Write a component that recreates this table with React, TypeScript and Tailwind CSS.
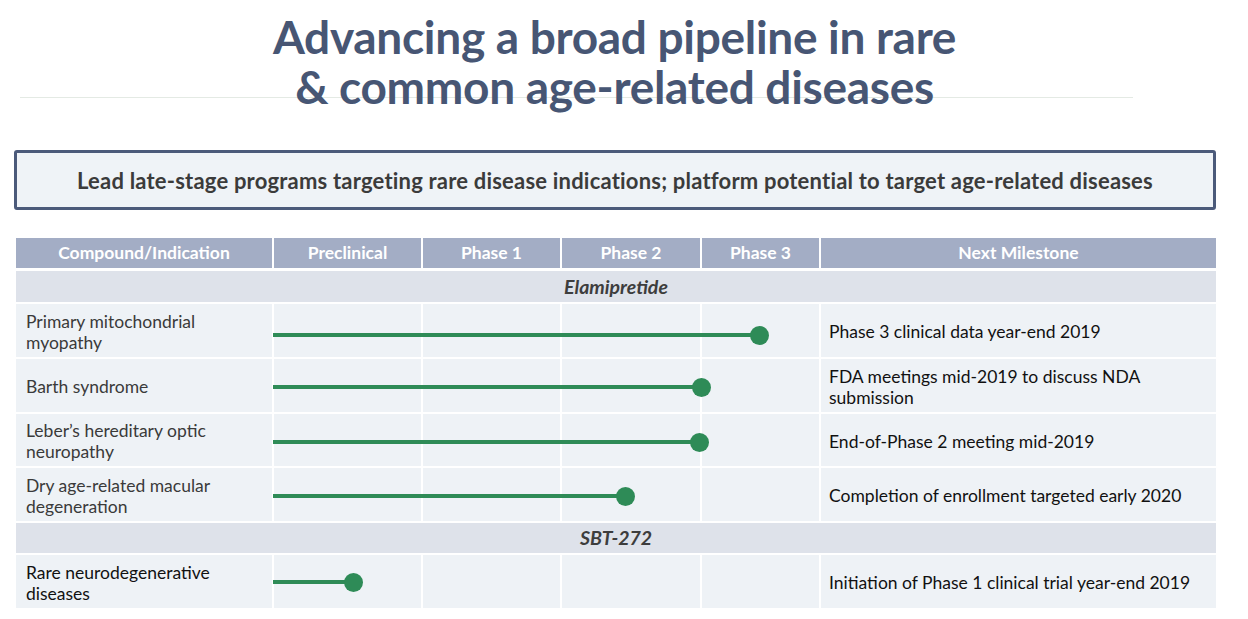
import React from "react";

const COLS = "grid grid-cols-[256px_147px_137px_138px_117px_395px] gap-x-[2px]";

type Row = {
  name: React.ReactNode;
  milestone: React.ReactNode;
  dot: number;
  cy: number;
  h: string;
  dark?: boolean;
};

function PipelineRow({ row }: { row: Row }) {
  const left = 257;
  return (
    <div className={`relative ${COLS} ${row.h}`}>
      <div className={`bg-[#eef2f6] flex items-center pl-[10px] pt-[2px] text-[17.5px] leading-[21px] ${row.dark ? "text-[#111]" : "text-[#3a3a3a]"}`}>
        <div>{row.name}</div>
      </div>
      <div className="bg-[#eef2f6]" />
      <div className="bg-[#eef2f6]" />
      <div className="bg-[#eef2f6]" />
      <div className="bg-[#eef2f6]" />
      <div className="bg-[#eef2f6] flex items-center pl-[8px] pt-[2px] text-[17.5px] leading-[21px] text-[#111]">
        <div>{row.milestone}</div>
      </div>
      <div
        className="absolute h-[4px] bg-[#2e8b57]"
        style={{ left, width: row.dot - left, top: row.cy - 2 }}
      />
      <div
        className="absolute w-[19px] h-[19px] rounded-full bg-[#2e8b57]"
        style={{ left: row.dot - 9.5, top: row.cy - 9.5 }}
      />
    </div>
  );
}

function SubHeader({ label, h }: { label: string; h: string }) {
  return (
    <div className={`bg-[#dee2ea] ${h} flex items-center justify-center text-[19.5px] font-bold italic text-[#3d3d3d]`}>
      {label}
    </div>
  );
}

export default function App() {
  const rows1: Row[] = [
    {
      name: (
        <>
          Primary mitochondrial
          <br />
          myopathy
        </>
      ),
      milestone: "Phase 3 clinical data year-end 2019",
      dot: 743,
      cy: 31,
      h: "h-[53px]",
    },
    {
      name: "Barth syndrome",
      milestone: (
        <>
          FDA meetings mid-2019 to discuss NDA
          <br />
          submission
        </>
      ),
      dot: 685,
      cy: 28,
      h: "h-[53px]",
    },
    {
      name: (
        <>
          Leber’s hereditary optic
          <br />
          neuropathy
        </>
      ),
      milestone: "End-of-Phase 2 meeting mid-2019",
      dot: 683,
      cy: 28,
      h: "h-[52px]",
    },
    {
      name: (
        <>
          Dry age-related macular
          <br />
          degeneration
        </>
      ),
      milestone: "Completion of enrollment targeted early 2020",
      dot: 609,
      cy: 28,
      h: "h-[53px]",
    },
  ];
  const row5: Row = {
    name: (
      <>
        Rare neurodegenerative
        <br />
        diseases
      </>
    ),
    milestone: "Initiation of Phase 1 clinical trial year-end 2019",
    dot: 337,
    cy: 27,
    h: "h-[53px]",
    dark: true,
  };

  const headers = ["Compound/Indication", "Preclinical", "Phase 1", "Phase 2", "Phase 3", "Next Milestone"];

  return (
    <div className="w-[1248px] h-[619px] bg-white overflow-hidden font-['Lato',sans-serif]">
      <div className="relative pt-[12px]">
        <div className="absolute left-[20px] top-[97px] w-[1113px] h-px bg-[#e4eae4]" />
        <h1 className="relative text-center text-[46px] leading-[50px] font-bold tracking-[-0.3px] text-[#475674] pr-[19px]">
          Advancing a broad pipeline in rare
          <br />
          &amp; common age-related diseases
        </h1>
      </div>

      <div className="ml-[14px] mt-[38px] w-[1202px] h-[60px] border-[3px] border-[#4b5a7a] rounded-[3px] bg-[#eff3f7] flex items-center justify-center">
        <span className="text-[22px] font-bold text-[#3b3b3b] tracking-[0.2px]">
          Lead late-stage programs targeting rare disease indications; platform potential to target age-related diseases
        </span>
      </div>

      <div className="ml-[16px] mt-[28px] w-[1200px] flex flex-col">
        <div className={`${COLS} h-[30px]`}>
          {headers.map((h) => (
            <div key={h} className="bg-[#a3adc5] flex items-center justify-center text-white font-bold text-[17.5px]">
              {h}
            </div>
          ))}
        </div>
        <div className="mt-[3px]">
          <SubHeader label="Elamipretide" h="h-[31px]" />
        </div>
        {rows1.map((r, i) => (
          <div key={i} className="mt-[2px]">
            <PipelineRow row={r} />
          </div>
        ))}
        <div className="mt-[2px]">
          <SubHeader label="SBT-272" h="h-[30px]" />
        </div>
        <div className="mt-[2px]">
          <PipelineRow row={row5} />
        </div>
      </div>
    </div>
  );
}
